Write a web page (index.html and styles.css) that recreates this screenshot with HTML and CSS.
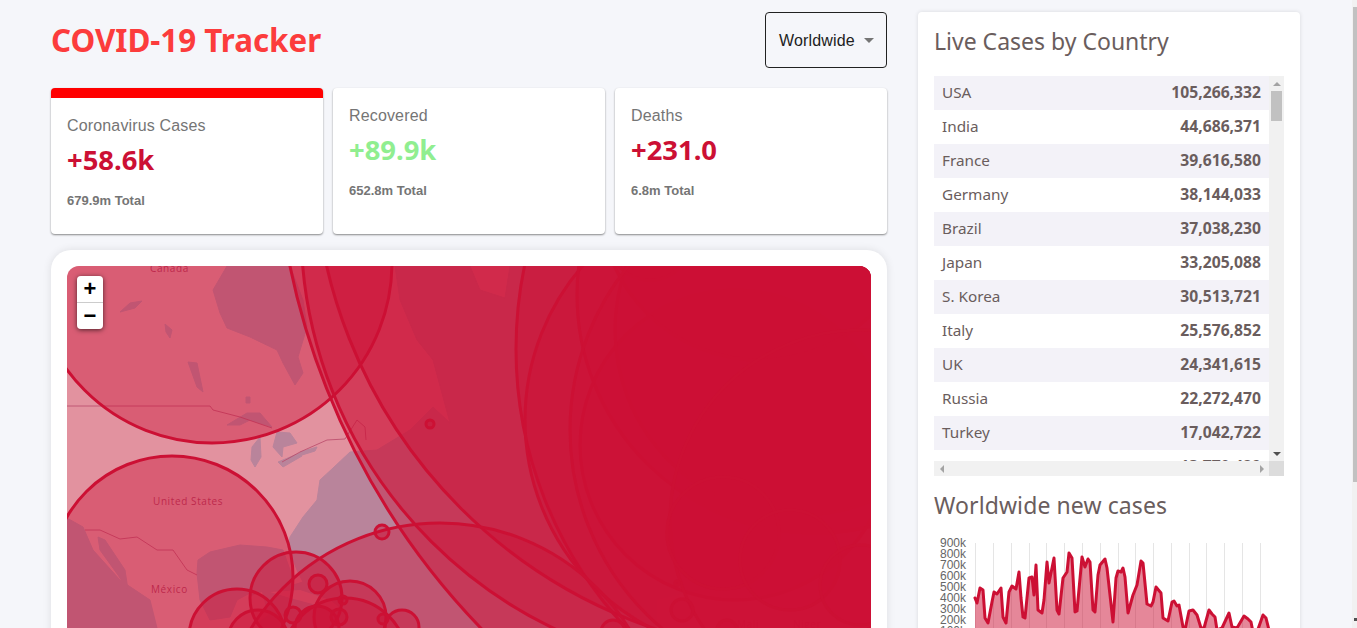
FILE: index.html
```html
<!DOCTYPE html>
<html lang="en">
<head>
    <meta charset="UTF-8">
    <meta name="viewport" content="width=device-width, initial-scale=1.0">
    <title>COVID-19 Tracker</title>
    <link rel="stylesheet" href="styles.css">
</head>
<body>
    <div class="app">
        <div class="app-left">
            <div class="app-header">
                <h1>COVID-19 Tracker</h1>
                <div class="country-select">
                    <span>Worldwide</span>
                    <span class="caret"></span>
                </div>
            </div>

            <div class="stats">
                <div class="info-box info-box-active">
                    <p class="info-title">Coronavirus Cases</p>
                    <p class="info-cases">+58.6k</p>
                    <p class="info-total">679.9m Total</p>
                </div>
                <div class="info-box">
                    <p class="info-title">Recovered</p>
                    <p class="info-cases info-green">+89.9k</p>
                    <p class="info-total">652.8m Total</p>
                </div>
                <div class="info-box">
                    <p class="info-title">Deaths</p>
                    <p class="info-cases">+231.0</p>
                    <p class="info-total">6.8m Total</p>
                </div>
            </div>

            <div class="map-card">
                <div class="map">
                    <svg class="map-svg" viewBox="67 266 804 500" width="804" height="500">
                        <!-- water -->
                        <g class="water">
                            <path d="M227 266 L213 290 L220 313 L227 328 L250 337 L277 350 L283 363 L295 385 L303 373 L298 357 L307 327 L303 300 L290 266 Z"/>
                            <path d="M350 452 L333 468 L320 480 L317 500 L303 517 L290 537 L288 547 L297 570 L303 582 L293 585 L290 570 L283 550 L267 547 L240 545 L227 548 L210 552 L198 560 L197 573 L200 600 L210 620 L230 617 L237 600 L250 593 L262 628 L871 628 L871 266 L510 266 L505 298 L480 290 L470 266 L395 266 L400 300 L417 340 L433 360 L450 423 L433 407 L410 430 L377 450 Z"/>
                            <path d="M67 518 L83 527 L93 550 L120 580 L150 600 L157 628 L67 628 Z"/>
                            <path d="M98 537 L105 540 L125 570 L128 590 L118 575 L100 550 Z"/>
                            <path d="M227 425 L247 413 L260 413 L272 427 L250 420 L240 425 Z"/>
                            <path d="M252 447 L260 437 L261 457 L255 467 L251 460 Z"/>
                            <path d="M277 432 L290 433 L297 443 L283 447 L282 457 L273 447 Z"/>
                            <path d="M278 462 L300 453 L302 456 L283 467 Z"/>
                            <path d="M300 452 L317 447 L315 451 L302 455 Z"/>
                            <path d="M188 362 L197 363 L203 392 L197 387 Z"/>
                            <path d="M130 303 L142 301 L135 308 L120 312 Z"/>
                            <path d="M165 324 L172 330 L170 338 L166 332 Z"/>
                            <path d="M246 397 L250 397 L250 403 L246 403 Z"/>
                        </g>
                        <!-- land over the water: Yucatan, Cuba, Africa -->
                        <g class="land">
                            <path d="M240 600 L262 592 L268 615 L250 628 L232 628 Z"/>
                            <path d="M270 592 L300 590 L330 600 L345 612 L320 606 L290 598 Z"/>
                            <path d="M657 628 L657 600 L700 590 L871 590 L871 628 Z"/>
                        </g>
                        <!-- borders -->
                        <g class="borders">
                            <path d="M67 406 L210 406 L213 410 L240 417 L272 428"/>
                            <path d="M85 530 L100 530 L120 539 L137 537 L157 550 L173 550 L187 570 L197 575"/>
                            <path d="M282 462 L300 452 L327 440 L345 439 L357 420 L365 427 L366 440"/>
                        </g>
                        <!-- labels -->
                        <g class="map-labels">
                            <text x="150" y="272">Canada</text>
                            <text x="153" y="505">United States</text>
                            <text x="151" y="593">México</text>
                            <text x="737" y="628">Mali</text>
                            <text x="793" y="628">Niger</text>
                        </g>
                        <!-- case circles -->
                        <g class="cases">
                            <circle cx="212" cy="263" r="180"/>
                            <circle cx="172" cy="577" r="121"/>
                            <circle cx="1010" cy="118" r="735"/>
                            <circle cx="746" cy="227" r="445"/>
                            <circle cx="815" cy="154" r="501"/>
                            <circle cx="924" cy="349" r="408"/>
                            <circle cx="760" cy="420" r="235"/>
                            <circle cx="815" cy="295" r="238"/>
                            <circle cx="735" cy="445" r="155"/>
                            <circle cx="800" cy="330" r="185"/>
                            <circle cx="760" cy="200" r="160"/>
                            <circle cx="650" cy="238" r="42"/>
                            <circle cx="830" cy="430" r="260"/>
                            <circle cx="860" cy="520" r="190"/>
                            <circle cx="723" cy="533" r="56"/>
                            <circle cx="790" cy="560" r="50"/>
                            <circle cx="860" cy="585" r="40"/>
                            <circle cx="440" cy="745" r="222"/>
                            <circle cx="296" cy="598" r="46"/>
                            <circle cx="237" cy="637" r="48"/>
                            <circle cx="350" cy="617" r="36"/>
                            <circle cx="345" cy="660" r="62"/>
                            <circle cx="258" cy="640" r="30"/>
                            <circle cx="317" cy="628" r="22"/>
                            <circle cx="402" cy="627" r="17"/>
                            <circle cx="318" cy="584" r="9"/>
                            <circle cx="343" cy="600" r="4"/>
                            <circle cx="293" cy="615" r="8"/>
                            <circle cx="339" cy="617" r="8"/>
                            <circle cx="383" cy="619" r="5"/>
                            <circle cx="430" cy="424" r="4"/>
                            <circle cx="382" cy="532" r="7"/>
                            <circle cx="682" cy="610" r="11"/>
                            <circle cx="727" cy="630" r="10"/>
                            <circle cx="613" cy="632" r="12"/>
                            <circle cx="677" cy="583" r="2"/>
                        </g>
                    </svg>
                    <div class="zoom-control">
                        <span class="zoom-btn">+</span>
                        <span class="zoom-btn">−</span>
                    </div>
                </div>
            </div>
        </div>

        <div class="app-right">
            <h3>Live Cases by Country</h3>
            <div class="table-wrap">
                <div class="table-view">
                    <table class="country-table">
                        <tr><td>USA</td><td class="num">105,266,332</td></tr>
                        <tr><td>India</td><td class="num">44,686,371</td></tr>
                        <tr><td>France</td><td class="num">39,616,580</td></tr>
                        <tr><td>Germany</td><td class="num">38,144,033</td></tr>
                        <tr><td>Brazil</td><td class="num">37,038,230</td></tr>
                        <tr><td>Japan</td><td class="num">33,205,088</td></tr>
                        <tr><td>S. Korea</td><td class="num">30,513,721</td></tr>
                        <tr><td>Italy</td><td class="num">25,576,852</td></tr>
                        <tr><td>UK</td><td class="num">24,341,615</td></tr>
                        <tr><td>Russia</td><td class="num">22,272,470</td></tr>
                        <tr><td>Turkey</td><td class="num">17,042,722</td></tr>
                        <tr><td>Spain</td><td class="num">13,770,429</td></tr>
                    </table>
                </div>
                <div class="vbar">
                    <div class="bar-btn"><span class="arrow-up"></span></div>
                    <div class="vbar-thumb"></div>
                    <div class="bar-btn bar-end"><span class="arrow-down"></span></div>
                </div>
                <div class="hbar">
                    <div class="bar-btn"><span class="arrow-left"></span></div>
                    <div class="bar-btn"><span class="arrow-right"></span></div>
                </div>
                <div class="bar-corner"></div>
            </div>

            <h3 class="graph-title">Worldwide new cases</h3>
            <svg class="graph" viewBox="934 536 350 110" width="350" height="110">
                <g class="graph-ticks">
                    <text x="966" y="547">900k</text>
                    <text x="966" y="558">800k</text>
                    <text x="966" y="569">700k</text>
                    <text x="966" y="580">600k</text>
                    <text x="966" y="591">500k</text>
                    <text x="966" y="602">400k</text>
                    <text x="966" y="613">300k</text>
                    <text x="966" y="624">200k</text>
                    <text x="966" y="635">100k</text>
                </g>
                <path class="graph-grid" d="M975.5 543V642M993.5 543V642M1011.5 543V642M1029.5 543V642M1046.5 543V642M1064.5 543V642M1082.5 543V642M1100.5 543V642M1118.5 543V642M1135.5 543V642M1153.5 543V642M1171.5 543V642M1189.5 543V642M1206.5 543V642M1224.5 543V642M1242.5 543V642M1260.5 543V642"/>
                <polygon class="graph-fill" points="975,642 975,598 977,603 980,588 983,590 985,618 988,623 992,602 994,592 997,594 1001,588 1003,617 1006,623 1009,592 1012,586 1016,589 1019,572 1021,598 1023,617 1025,618 1029,578 1032,577 1034,595 1036,565 1038,610 1042,613 1044,600 1047,562 1049,583 1054,558 1057,610 1059,614 1063,578 1067,572 1069,553 1072,558 1075,612 1077,611 1082,557 1085,567 1088,559 1090,562 1093,610 1095,612 1098,575 1100,565 1105,559 1107,568 1113,622 1116,578 1118,571 1121,572 1123,568 1125,577 1128,613 1133,595 1137,585 1141,561 1143,563 1147,604 1151,606 1153,602 1156,587 1161,593 1163,618 1168,621 1172,602 1174,601 1177,606 1179,605 1183,627 1185,630 1189,611 1193,610 1197,615 1201,628 1204,628 1209,610 1212,614 1215,617 1217,630 1222,628 1229,613 1232,627 1237,628 1244,616 1248,619 1251,622 1253,632 1257,632 1263,615 1266,618 1269,630 1271,642"/>
                <polyline class="graph-line" points="975,598 977,603 980,588 983,590 985,618 988,623 992,602 994,592 997,594 1001,588 1003,617 1006,623 1009,592 1012,586 1016,589 1019,572 1021,598 1023,617 1025,618 1029,578 1032,577 1034,595 1036,565 1038,610 1042,613 1044,600 1047,562 1049,583 1054,558 1057,610 1059,614 1063,578 1067,572 1069,553 1072,558 1075,612 1077,611 1082,557 1085,567 1088,559 1090,562 1093,610 1095,612 1098,575 1100,565 1105,559 1107,568 1113,622 1116,578 1118,571 1121,572 1123,568 1125,577 1128,613 1133,595 1137,585 1141,561 1143,563 1147,604 1151,606 1153,602 1156,587 1161,593 1163,618 1168,621 1172,602 1174,601 1177,606 1179,605 1183,627 1185,630 1189,611 1193,610 1197,615 1201,628 1204,628 1209,610 1212,614 1215,617 1217,630 1222,628 1229,613 1232,627 1237,628 1244,616 1248,619 1251,622 1253,632 1257,632 1263,615 1266,618 1269,630 1271,642"/>
            </svg>
        </div>
    </div>

    <div class="page-scroll">
        <div class="page-thumb"></div>
        <div class="page-arrow"></div>
    </div>
</body>
</html>
```

FILE: styles.css
```css
* {
    box-sizing: border-box;
}

html,
body {
    height: 100%;
    margin: 0;
    overflow: hidden;
}

body {
    background-color: #f5f6fa;
    font-family: "Noto Sans", sans-serif;
}

.app {
    display: flex;
    gap: 31px;
    padding: 12px 0 0 51px;
}

.app-left {
    width: 836px;
}

.app-header {
    display: flex;
    align-items: center;
    justify-content: space-between;
    height: 56px;
    margin-bottom: 20px;
}

h1 {
    margin: 0;
    font-size: 31.3px;
    font-weight: 700;
    line-height: 56px;
    color: #fc3c3c;
}

.country-select {
    display: flex;
    align-items: center;
    justify-content: space-between;
    width: 122px;
    height: 56px;
    padding: 1px 12px 0 13px;
    border: 1px solid #212121;
    border-radius: 4px;
    background-color: #f5f6fa;
    font-family: "Liberation Sans", Arial, sans-serif;
    font-size: 16px;
    letter-spacing: 0.15px;
    color: #212121;
}

.caret {
    width: 0;
    height: 0;
    border-left: 5px solid transparent;
    border-right: 5px solid transparent;
    border-top: 5px solid #757575;
}

.stats {
    display: flex;
    gap: 10px;
    height: 146px;
}

.info-box {
    flex: 1;
    padding: 16px;
    border-radius: 4px;
    background-color: white;
    box-shadow: 0 1px 2px rgba(0,0,0,0.45);
}

.info-box-active {
    border-top: 10px solid red;
}

.info-title {
    margin: 0;
    font-family: "Liberation Sans", Arial, sans-serif;
    font-size: 16px;
    letter-spacing: 0.15px;
    line-height: 23px;
    color: #757575;
}

.info-cases {
    margin: 0;
    font-size: 27.4px;
    font-weight: 700;
    line-height: 46px;
    color: #cc1034;
}

.info-green {
    color: lightgreen;
}

.info-total {
    margin: 8px 0 0;
    font-family: "Liberation Sans", Arial, sans-serif;
    font-size: 13px;
    font-weight: 700;
    line-height: 19px;
    color: #757575;
}

.map-card {
    margin-top: 16px;
    padding: 16px;
    border-radius: 20px;
    background-color: white;
    box-shadow: 0 0 8px rgba(0,0,0,0.1);
}

.map {
    position: relative;
    height: 500px;
    overflow: hidden;
    border-radius: 12px;
    background-color: #e2929f;
}

.map-svg {
    display: block;
}

.water {
    fill: #b9849b;
    stroke: #b9849b;
    stroke-width: 1;
    stroke-linejoin: round;
}

.land {
    fill: #e2929f;
}

.borders {
    fill: none;
    stroke: #b9496a;
    stroke-width: 0.8;
}

.map-labels {
    font-family: "Open Sans", sans-serif;
    font-size: 10px;
    letter-spacing: 0.6px;
    fill: #b23a5c;
}

.cases circle {
    fill: rgba(204,16,52,0.4);
    stroke: #cc1034;
    stroke-width: 3;
}

.zoom-control {
    position: absolute;
    top: 10px;
    left: 10px;
    display: flex;
    flex-direction: column;
    border-radius: 4px;
    overflow: hidden;
    box-shadow: 0 1px 5px rgba(0,0,0,0.65);
}

.zoom-btn {
    width: 26px;
    height: 26px;
    background-color: white;
    font-family: "Liberation Sans", Arial, sans-serif;
    font-size: 22px;
    font-weight: 700;
    line-height: 26px;
    text-align: center;
    color: black;
}

.zoom-btn:first-child {
    height: 27px;
    border-bottom: 1px solid #ccc;
}

.app-right {
    width: 382px;
    height: 700px;
    padding: 16px;
    border-radius: 4px;
    background-color: white;
    box-shadow: 0 0 4px rgba(0,0,0,0.12);
}

h3 {
    margin: -1px 0 21px;
    font-size: 23px;
    font-weight: 400;
    line-height: 28px;
    color: #6a5d5d;
}

.table-wrap {
    display: grid;
    grid-template-columns: 335px 15px;
    grid-template-rows: 385px 15px;
}

.table-view {
    overflow: hidden;
}

.country-table {
    width: 100%;
    border-collapse: collapse;
    font-size: 15.3px;
    line-height: 18px;
    color: #6a5d5d;
}

.country-table tr:nth-of-type(odd) {
    background-color: #f3f2f8;
}

.country-table td {
    padding: 7px 8px 9px;
}

.country-table tr:last-child td:first-child {
    padding-top: 6px;
}

.num {
    font-size: 15.7px;
    font-weight: 700;
    text-align: right;
}

.vbar {
    display: flex;
    flex-direction: column;
    background-color: #f1f1f1;
}

.hbar {
    display: flex;
    justify-content: space-between;
    background-color: #f1f1f1;
}

.bar-corner {
    background-color: #dcdcdc;
}

.bar-btn {
    display: flex;
    align-items: center;
    justify-content: center;
    width: 15px;
    height: 15px;
}

.bar-end {
    margin-top: auto;
}

.vbar-thumb {
    height: 30px;
    margin: 0 2px;
    background-color: #c1c1c1;
}

.arrow-up {
    border-left: 4px solid transparent;
    border-right: 4px solid transparent;
    border-bottom: 4px solid #a3a3a3;
}

.arrow-down {
    border-left: 4px solid transparent;
    border-right: 4px solid transparent;
    border-top: 4px solid #505050;
}

.arrow-left {
    border-top: 4px solid transparent;
    border-bottom: 4px solid transparent;
    border-right: 4px solid #a3a3a3;
}

.arrow-right {
    border-top: 4px solid transparent;
    border-bottom: 4px solid transparent;
    border-left: 4px solid #a3a3a3;
}

.graph-title {
    margin: 15px 0 17px;
    letter-spacing: 0.1px;
}

.graph {
    display: block;
}

.graph-ticks {
    font-family: "Liberation Sans", Arial, sans-serif;
    font-size: 12px;
    fill: #666;
    text-anchor: end;
}

.graph-grid {
    fill: none;
    stroke: #e5e5e5;
    stroke-width: 1;
}

.graph-fill {
    fill: rgba(204,16,52,0.5);
}

.graph-line {
    fill: none;
    stroke: #cc1034;
    stroke-width: 3;
    stroke-linejoin: round;
    stroke-linecap: round;
}

.page-scroll {
    position: fixed;
    top: 0;
    right: 0;
    bottom: 0;
    width: 5px;
    background-color: #f1f1f1;
}

.page-thumb {
    position: absolute;
    top: 7px;
    right: 0;
    width: 4px;
    height: 475px;
    background-color: #c1c1c1;
}

.page-arrow {
    position: absolute;
    bottom: 7px;
    right: 0;
    width: 3px;
    height: 3px;
    background-color: #505050;
}
```
